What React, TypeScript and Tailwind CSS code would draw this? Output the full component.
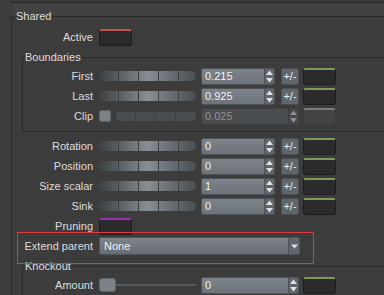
import React from 'react';

type RowProps = { label: string; inner?: boolean; children?: React.ReactNode };

function Row({ label, inner, children }: RowProps) {
  return (
    <div className="flex items-center h-[20px]">
      <div className={`${inner ? 'w-[76px]' : 'w-[87px]'} shrink-0 text-right pr-[6px] whitespace-nowrap`}>{label}</div>
      {children}
    </div>
  );
}

function Slider() {
  return (
    <div className="flex w-[97px] h-[10px] rounded-[5px] overflow-hidden bg-linear-to-r from-[#3d4144] via-[#878e94] to-[#4a4f53]">
      <div className="w-[20px] border-r border-[#3a3d40]" />
      <div className="w-[20px] border-r border-[#3a3d40]" />
      <div className="w-[20px] border-r border-[#3a3d40]" />
      <div className="w-[20px] border-r border-[#3a3d40]" />
      <div className="flex-1" />
    </div>
  );
}

function SpinArrows({ disabled }: { disabled?: boolean }) {
  const c = disabled ? '#8c9094' : '#dfe2e5';
  return (
    <div className={`w-[10px] h-full flex items-center justify-center border-l ${disabled ? 'bg-[#46494c] border-[#3a3c3e]' : 'bg-[#5f656a] border-[#4b5055]'}`}>
      <svg width="7" height="13" viewBox="0 0 7 13">
        <path d="M3.5 0.5 L7 5 L0 5 Z" fill={c} />
        <path d="M0 8 L7 8 L3.5 12.5 Z" fill={c} />
      </svg>
    </div>
  );
}

function NumField({ value, wide, disabled }: { value: string; wide?: boolean; disabled?: boolean }) {
  return (
    <div
      className={`flex h-[17px] rounded-[2px] border overflow-hidden shrink-0 ${wide ? 'w-[98px]' : 'w-[74px]'} ${
        disabled ? 'border-[#3d3f41] bg-[#4a4d50] text-[#8e9295]' : 'border-[#4e5358] bg-linear-to-b from-[#7c838a] to-[#6c7379] text-[#f2f2f2]'
      }`}
    >
      <div className="flex-1 flex items-center pl-[3px]">{value}</div>
      <SpinArrows disabled={disabled} />
    </div>
  );
}

function PlusMinus() {
  return (
    <div className="ml-[6px] w-[18px] h-[17px] shrink-0 flex items-center justify-center rounded-[2px] border border-[#4a4f53] bg-[#60666c] text-[#eeeeee]">
      +/-
    </div>
  );
}

function Swatch({ line, disabled, className }: { line: string; disabled?: boolean; className?: string }) {
  return (
    <div
      className={`w-[33px] h-[17px] shrink-0 rounded-[3px] border border-t-2 ${line} ${
        disabled ? 'bg-[#424344] border-x-[#3a3b3c] border-b-[#3a3b3c]' : 'bg-[#2a2b2a] border-x-[#1d1e1d] border-b-[#1d1e1d]'
      } ${className ?? ''}`}
    />
  );
}

function NumRow({ label, value, inner }: { label: string; value: string; inner?: boolean }) {
  return (
    <Row label={label} inner={inner}>
      <Slider />
      <div className="ml-[5px]">
        <NumField value={value} />
      </div>
      <PlusMinus />
      <Swatch line="border-t-[#7d9c59]" className="ml-[4px]" />
    </Row>
  );
}

export default function App() {
  return (
    <div className="relative w-[384px] h-[295px] overflow-hidden bg-[#3c3c3c] text-[#dcdcdc] text-[11px] leading-[13px] font-['Liberation_Sans',Arial,sans-serif]">
      <div className="w-[420px]">
        {/* bottom of previous group */}
        <div className="ml-[11px] h-[3px] border-l border-b border-[#2a2a2a]" />
        <div className="ml-[12px] h-[13px] bg-[#424242]" />

        {/* Shared */}
        <fieldset className="relative -mt-[6px] ml-[11px] border-l border-t border-[#2a2a2a]">
          <legend className="ml-[3px] px-[1px] leading-[13px]">Shared</legend>
          <div className="pt-[4px]">
            <Row label="Active">
              <Swatch line="border-t-[#c0574f]" />
            </Row>

            {/* Boundaries */}
            <fieldset className="ml-[10px] mt-[4px] border-l border-t border-b border-[#2a2a2a] pb-[5px]">
              <legend className="ml-[1px] px-[1px] leading-[13px]">Boundaries</legend>
              <div className="pt-[2px]">
                <NumRow label="First" value="0.215" inner />
                <NumRow label="Last" value="0.925" inner />
                <Row label="Clip" inner>
                  <div className="w-[12px] h-[12px] shrink-0 rounded-[2px] border border-[#5d6368] bg-[#7a8187]" />
                  <div className="ml-[5px] flex w-[80px] h-[9px] rounded-[4px] overflow-hidden bg-[#4a4d50]">
                    <div className="w-[20px] border-r border-[#3e4042]" />
                    <div className="w-[20px] border-r border-[#3e4042]" />
                    <div className="w-[20px] border-r border-[#3e4042]" />
                    <div className="flex-1" />
                  </div>
                  <div className="ml-[5px]">
                    <NumField value="0.025" wide disabled />
                  </div>
                  <Swatch line="border-t-[#7c7c7c]" disabled className="ml-[4px]" />
                </Row>
              </div>
            </fieldset>

            <div className="mt-[4px]">
              <NumRow label="Rotation" value="0" />
              <NumRow label="Position" value="0" />
              <NumRow label="Size scalar" value="1" />
              <NumRow label="Sink" value="0" />
              <Row label="Pruning">
                <Swatch line="border-t-[#9a2fae]" />
              </Row>
              <Row label="Extend parent">
                <div className="flex w-[201px] h-[18px] rounded-[2px] border border-[#4e5358] overflow-hidden bg-linear-to-b from-[#7d848a] to-[#666c72] text-[#f2f2f2]">
                  <div className="flex-1 flex items-center pl-[4px]">None</div>
                  <div className="w-[11px] flex items-center justify-center border-l border-[#4b5055] bg-[#60666b]">
                    <svg width="7" height="5" viewBox="0 0 7 5">
                      <path d="M0 0.5 L7 0.5 L3.5 4.5 Z" fill="#dfe2e5" />
                    </svg>
                  </div>
                </div>
              </Row>
            </div>

            {/* Knockout */}
            <fieldset className="ml-[10px] mt-[4px] border-l border-t border-[#2a2a2a]">
              <legend className="ml-[1px] px-[1px] leading-[13px]">Knockout</legend>
              <div className="pt-[2px]">
                <Row label="Amount" inner>
                  <div className="w-[17px] h-[14px] shrink-0 rounded-[3px] border border-[#5d6368] bg-[#7a8187]" />
                  <div className="w-[80px] h-[2px] bg-[#56595c]" />
                  <div className="ml-[5px]">
                    <NumField value="0" wide />
                  </div>
                  <Swatch line="border-t-[#7d9c59]" className="ml-[4px]" />
                </Row>
              </div>
            </fieldset>
          </div>
        </fieldset>
      </div>

      {/* highlight */}
      <div className="absolute left-[17px] top-[232px] w-[297px] h-[32px] border border-[#e0393b]" />
    </div>
  );
}
